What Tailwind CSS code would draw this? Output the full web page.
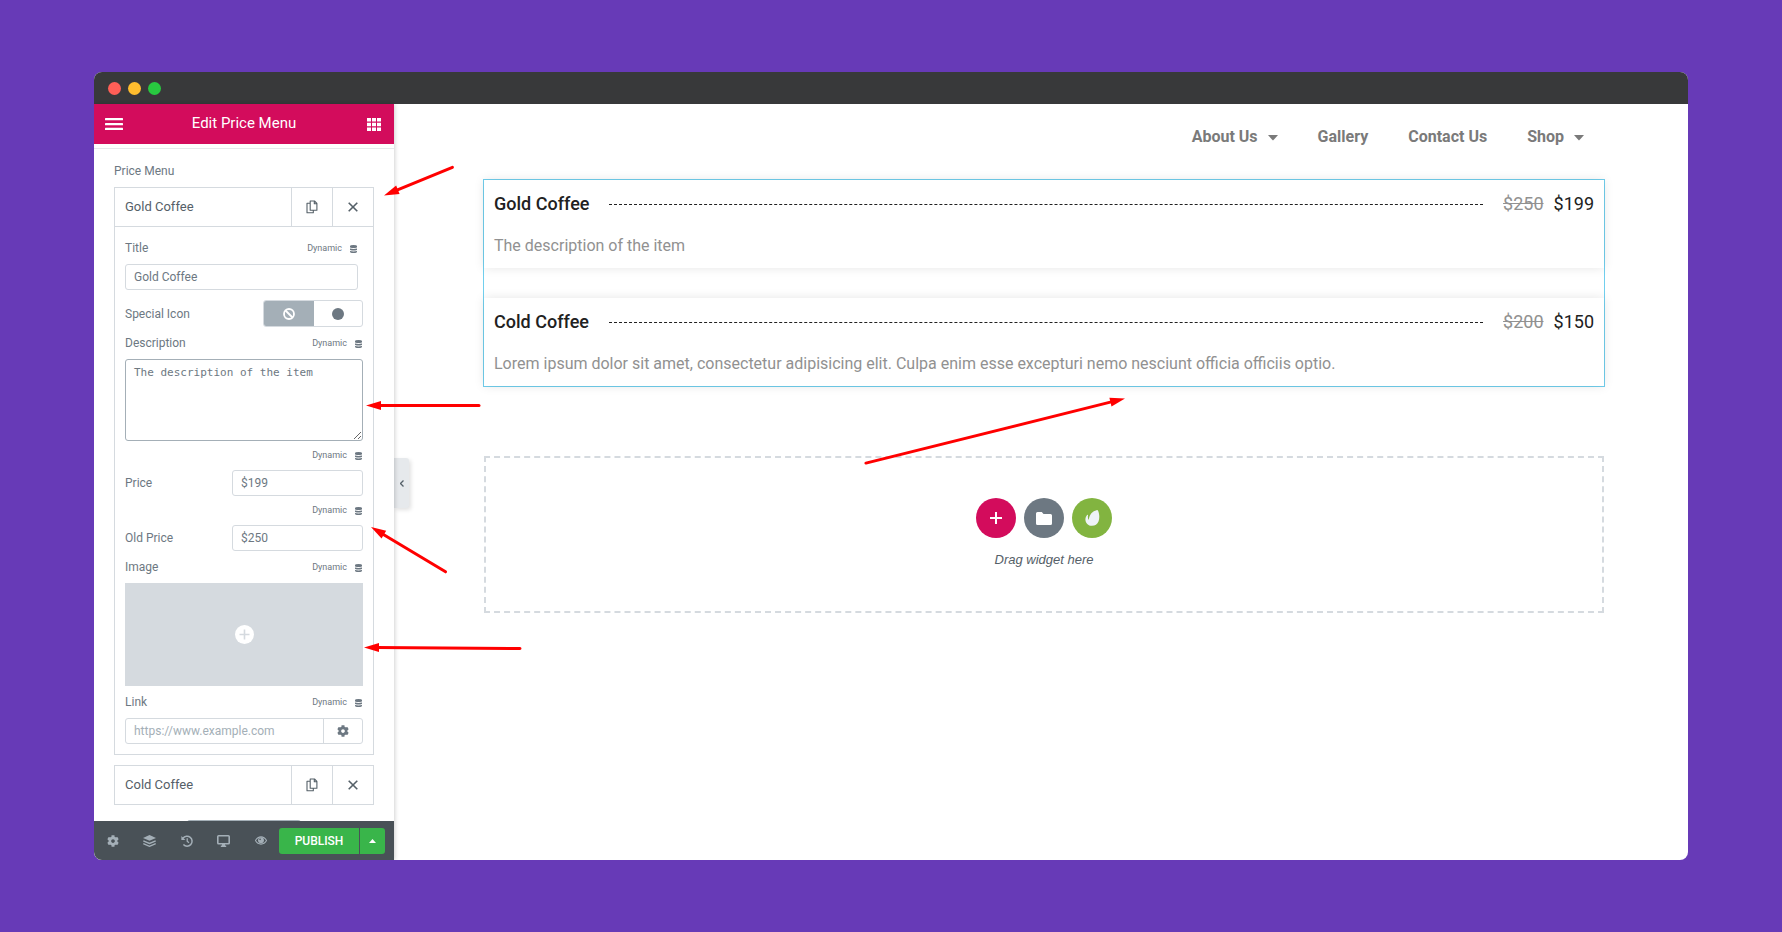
<!DOCTYPE html>
<html lang="en">
<head>
<meta charset="utf-8">
<title>Edit Price Menu</title>
<script src="https://cdn.jsdelivr.net/npm/@tailwindcss/browser@4"></script>
</head>
<body class="relative h-screen bg-[#673ab7] px-[94px] py-[72px] font-[Roboto,'Liberation_Sans',sans-serif] text-[#6d7882]">

<svg class="hidden" aria-hidden="true">
  <symbol id="db" viewBox="0 0 7 8"><path d="M0 1.300Q0 0 3.500 0T7 1.300v.9Q7 3 3.500 3T0 2.200zM0 3.500Q3.500 4.300 7 3.500v1.200q0 .8-3.500.8T0 4.700zM0 6Q3.500 6.800 7 6v.8Q7 8 3.500 8T0 6.800z"/></symbol>
  <symbol id="copy" viewBox="0 0 12 14"><path d="M4.200 1h4.300L10.900 3.400V10.300H4.200zM8.300 1V3.800h2.600M4.200 3.300H1V12.700H7.300V10.300" fill="none" stroke="currentColor" stroke-width="1.100" stroke-linejoin="round"/></symbol>
  <symbol id="close" viewBox="0 0 10 10"><path d="M.7.7l8.600 8.600M9.300.7L.7 9.300" fill="none" stroke="currentColor" stroke-width="1.600"/></symbol>
  <symbol id="gear" viewBox="0 0 512 512"><path fill="currentColor" d="M487.400 315.700l-42.600-24.600c4.300-23.200 4.300-47 0-70.200l42.600-24.600c4.900-2.800 7.100-8.600 5.500-14-11.100-35.600-30-67.800-54.700-94.600-3.800-4.100-10-5.100-14.800-2.300L380.800 110c-17.900-15.400-38.500-27.300-60.800-35.100V25.800c0-5.600-3.900-10.500-9.400-11.700-36.700-8.200-74.300-7.800-109.200 0-5.500 1.200-9.400 6.100-9.400 11.700V75c-22.200 7.900-42.800 19.800-60.800 35.100L88.700 85.500c-4.900-2.800-11-1.900-14.800 2.300-24.700 26.700-43.600 58.900-54.700 94.600-1.700 5.400.6 11.200 5.500 14L67.300 221c-4.300 23.200-4.300 47 0 70.200l-42.600 24.600c-4.900 2.800-7.100 8.600-5.500 14 11.100 35.600 30 67.800 54.700 94.600 3.800 4.100 10 5.100 14.800 2.300l42.600-24.600c17.900 15.400 38.500 27.300 60.800 35.100v49.200c0 5.600 3.900 10.500 9.400 11.700 36.700 8.200 74.300 7.800 109.200 0 5.500-1.200 9.400-6.100 9.400-11.700v-49.200c22.200-7.900 42.800-19.800 60.800-35.100l42.600 24.600c4.900 2.800 11 1.900 14.800-2.300 24.700-26.700 43.600-58.900 54.700-94.600 1.500-5.500-.7-11.300-5.600-14.100zM256 336c-44.100 0-80-35.900-80-80s35.900-80 80-80 80 35.900 80 80-35.900 80-80 80z"/></symbol>
</svg>

<div class="flex h-full flex-col overflow-hidden rounded-[8px] bg-white">
  <div class="flex h-8 shrink-0 items-center gap-[7px] bg-[#38393a] pl-[14px] pt-px">
    <span class="size-[13px] rounded-full bg-[#ff5f57]"></span>
    <span class="size-[13px] rounded-full bg-[#ffbd2e]"></span>
    <span class="size-[13px] rounded-full bg-[#28c940]"></span>
  </div>

  <div class="flex min-h-0 flex-1">
    <aside class="z-10 flex w-[300px] shrink-0 flex-col bg-white shadow-[1px_0_4px_rgba(0,0,0,0.18)]">
      <header class="flex h-10 shrink-0 items-center justify-between bg-[#d30c5c] pl-[11px] pr-[13px] text-white">
        <button aria-label="Menu"><svg class="h-3 w-[18px]" viewBox="0 0 18 12" fill="currentColor"><rect y="0" width="18" height="2.300" rx=".5"/><rect y="5" width="18" height="2.300" rx=".5"/><rect y="9.700" width="18" height="2.300" rx=".5"/></svg></button>
        <h1 class="pb-[2px] pr-[2px] text-[15px] leading-5">Edit Price Menu</h1>
        <button aria-label="Widgets"><svg class="h-[13px] w-[14px]" viewBox="0 0 14 13" fill="currentColor"><path d="M0 0h4v3.500H0zM5 0h4v3.500H5zM10 0h4v3.500h-4zM0 4.700h4v3.500H0zM5 4.700h4v3.500H5zM10 4.700h4v3.500h-4zM0 9.500h4V13H0zM5 9.500h4V13H5zM10 9.500h4V13h-4z"/></svg></button>
      </header>

      <div class="mt-1 min-h-0 flex-1 overflow-hidden border-t border-[#e6e9ec] px-5 pt-3 text-[12px]">
        <h2 class="h-[26px] leading-5">Price Menu</h2>

        <section class="border border-[#d5dadf]">
          <div class="flex h-[39px] border-b border-[#d5dadf] text-[#556068]">
            <button class="flex-1 pl-[10px] text-left text-[13px]">Gold Coffee</button>
            <button aria-label="Duplicate Gold Coffee" class="flex w-[41px] items-center justify-center border-l border-[#d5dadf]"><svg class="h-[14px] w-3"><use href="#copy"/></svg></button>
            <button aria-label="Remove Gold Coffee" class="flex w-[41px] items-center justify-center border-l border-[#d5dadf]"><svg class="size-[10px]"><use href="#close"/></svg></button>
          </div>

          <div class="px-[10px] pb-[10px] pt-[11px]">
            <div class="flex h-5 items-center justify-between pr-[5px]">
              <label for="title">Title</label>
              <button class="flex items-center gap-2 pr-px pt-[2px] text-[9px]">Dynamic<svg class="h-2 w-[7px]" fill="currentColor"><use href="#db"/></svg></button>
            </div>
            <div class="mt-[6px] pr-[5px]"><input id="title" value="Gold Coffee" class="block h-[26px] w-full rounded-[3px] border border-[#d5dadf] px-2 text-[12px]"></div>

            <fieldset class="mt-[10px] flex h-[27px] items-center justify-between">
              <legend class="float-left mr-auto leading-7">Special Icon</legend>
              <div class="flex h-[27px] w-[100px] overflow-hidden rounded-[3px] border border-[#d5dadf]">
                <label class="flex w-[50px] items-center justify-center bg-[#a4afb7] text-white"><input type="radio" name="icon" checked class="sr-only" aria-label="None"><svg class="size-[12px]" viewBox="0 0 12 12" fill="none" stroke="currentColor" stroke-width="1.800"><circle cx="6" cy="6" r="5"/><path d="M2.500 2.500l7 7"/></svg></label>
                <label class="flex flex-1 items-center justify-center"><input type="radio" name="icon" class="sr-only" aria-label="Icon library"><span class="size-[12px] rounded-full bg-[#6d7882]"></span></label>
              </div>
            </fieldset>

            <div class="mt-[6px] flex h-5 items-center justify-between">
              <label for="description">Description</label>
              <button class="flex items-center gap-2 pr-px pt-[2px] text-[9px]">Dynamic<svg class="h-2 w-[7px]" fill="currentColor"><use href="#db"/></svg></button>
            </div>
            <textarea id="description" class="mt-[6px] block h-[82px] w-full rounded-[3px] border border-[#a4afb7] px-2 py-[5px] font-['DejaVu_Sans_Mono',monospace] text-[11px] leading-4">The description of the item</textarea>

            <div class="mt-[5px] flex h-5 items-center justify-end">
              <button class="flex items-center gap-2 pr-px text-[9px]">Dynamic<svg class="h-2 w-[7px]" fill="currentColor"><use href="#db"/></svg></button>
            </div>
            <div class="mt-1 flex h-[26px] items-center justify-between">
              <label for="price">Price</label>
              <input id="price" value="$199" class="h-[26px] w-[131px] rounded-[3px] border border-[#d5dadf] px-2 text-[12px]">
            </div>

            <div class="mt-[5px] flex h-5 items-center justify-end">
              <button class="flex items-center gap-2 pr-px text-[9px]">Dynamic<svg class="h-2 w-[7px]" fill="currentColor"><use href="#db"/></svg></button>
            </div>
            <div class="mt-1 flex h-[26px] items-center justify-between">
              <label for="old-price">Old Price</label>
              <input id="old-price" value="$250" class="h-[26px] w-[131px] rounded-[3px] border border-[#d5dadf] px-2 text-[12px]">
            </div>

            <div class="mt-[6px] flex h-5 items-center justify-between">
              <span>Image</span>
              <button class="flex items-center gap-2 pr-px pt-[2px] text-[9px]">Dynamic<svg class="h-2 w-[7px]" fill="currentColor"><use href="#db"/></svg></button>
            </div>
            <button aria-label="Choose image" class="mt-[6px] flex h-[103px] w-full items-center justify-center bg-[#d5dadf]">
              <svg class="size-[19px]" viewBox="0 0 19 19"><circle cx="9.500" cy="9.500" r="9.500" fill="#fff"/><path d="M9.500 4.500v10M4.500 9.500h10" stroke="#d5dadf" stroke-width="1.600"/></svg>
            </button>

            <div class="mt-[6px] flex h-5 items-center justify-between">
              <label for="link">Link</label>
              <button class="flex items-center gap-2 pr-px pt-[2px] text-[9px]">Dynamic<svg class="h-2 w-[7px]" fill="currentColor"><use href="#db"/></svg></button>
            </div>
            <div class="mt-[6px] flex h-[26px] rounded-[3px] border border-[#d5dadf]">
              <input id="link" placeholder="https://www.example.com" class="min-w-0 flex-1 px-2 text-[12px] placeholder:text-[#a4afb7]">
              <button aria-label="Link options" class="flex w-[39px] items-center justify-center border-l border-[#d5dadf]"><svg class="size-[12px]"><use href="#gear"/></svg></button>
            </div>
          </div>
        </section>

        <section class="mt-[10px] flex h-10 border border-[#d5dadf] text-[#556068]">
          <button class="flex-1 pl-[10px] text-left text-[13px]">Cold Coffee</button>
          <button aria-label="Duplicate Cold Coffee" class="flex w-[41px] items-center justify-center border-l border-[#d5dadf]"><svg class="h-[14px] w-3"><use href="#copy"/></svg></button>
          <button aria-label="Remove Cold Coffee" class="flex w-[41px] items-center justify-center border-l border-[#d5dadf]"><svg class="size-[10px]"><use href="#close"/></svg></button>
        </section>
        <button aria-label="Add item" class="mx-auto mt-[15px] block h-8 w-[114px] rounded-[3px] bg-[#a4afb7]"></button>
      </div>

      <footer class="flex h-[39px] shrink-0 items-center bg-[#495157] pr-[9px] text-[#a4afb7]">
        <div class="flex flex-1 items-center">
          <button aria-label="Settings" class="flex w-[37px] justify-center"><svg class="size-[12px]"><use href="#gear"/></svg></button>
          <button aria-label="Navigator" class="flex w-[37px] justify-center"><svg class="h-3 w-[13px]" viewBox="0 0 13 12" fill="currentColor"><path d="M6.500 0L13 2.900 6.500 5.800 0 2.900z"/><path d="M.3 5.800l6.200 2.700 6.200-2.700M.3 8.600l6.200 2.700 6.200-2.700" fill="none" stroke="currentColor" stroke-width="1.400"/></svg></button>
          <button aria-label="History" class="flex w-[37px] justify-center"><svg class="size-[12px]" viewBox="0 0 12 12" fill="none" stroke="currentColor" stroke-width="1.500"><path d="M2 3.300A5 5 0 1 1 2.400 9.600"/><path d="M6.200 3.300v3l1.800 1.400" stroke-width="1.300"/><path d="M.4.900v4h4z" fill="currentColor" stroke="none"/></svg></button>
          <button aria-label="Responsive mode" class="flex w-[37px] justify-center"><svg class="h-[12px] w-[13px]" viewBox="0 0 13 12"><rect x=".8" y=".8" width="11.400" height="8" rx=".8" fill="none" stroke="currentColor" stroke-width="1.600"/><path fill="currentColor" d="M5 9h3v1.500h1.200V12H3.800v-1.500H5z"/></svg></button>
          <button aria-label="Preview" class="flex w-[37px] justify-center"><svg class="h-[9px] w-3" viewBox="0 0 13 9"><path d="M.5 4.500Q2.800.6 6.500.6t6 3.900q-2.300 3.900-6 3.900T.5 4.500z" fill="none" stroke="currentColor" stroke-width="1.200"/><circle cx="6.500" cy="4.300" r="3.200" fill="currentColor"/><circle cx="5.500" cy="3.200" r=".9" fill="#495157"/></svg></button>
        </div>
        <div class="flex h-[26px] gap-px text-white">
          <button class="w-20 rounded-l-[3px] bg-[#39b54a] text-[12px] font-medium">PUBLISH</button>
          <button aria-label="Save options" class="flex w-[25px] items-center justify-center rounded-r-[3px] bg-[#39b54a]"><svg class="h-1 w-[7px]" viewBox="0 0 7 4" fill="currentColor"><path d="M0 4L3.500 0 7 4z"/></svg></button>
        </div>
      </footer>
    </aside>

    <button aria-label="Collapse panel" class="mt-[2px] flex h-[50px] w-[15px] shrink-0 items-center justify-center self-center rounded-r-[3px] bg-[#e6e9ec] shadow-[2px_2px_4px_rgba(0,0,0,0.12)]"><svg class="h-[7px] w-1" viewBox="0 0 4 7" fill="none" stroke="#556068" stroke-width="1.300"><path d="M3.500.5l-3 3 3 3"/></svg></button>

    <main class="min-w-0 flex-1 pl-[74px] pr-[83px]">
      <nav class="flex h-[75px] items-center justify-end gap-10 pb-[9px] pr-[21px] text-[16px] font-bold text-[#7a7a7a]">
        <a href="#" class="flex items-center gap-[10px]">About Us<svg class="mt-[2px] h-[6px] w-[10px]" viewBox="0 0 10 6" fill="currentColor"><path d="M0 0h10Q7.500 3 5 5.500 2.500 3 0 0z"/></svg></a>
        <a href="#">Gallery</a>
        <a href="#">Contact Us</a>
        <a href="#" class="flex items-center gap-[10px]">Shop<svg class="mt-[2px] h-[6px] w-[10px]" viewBox="0 0 10 6" fill="currentColor"><path d="M0 0h10Q7.500 3 5 5.500 2.500 3 0 0z"/></svg></a>
      </nav>

      <section class="flex flex-col gap-[30px] border border-[#71cfee]">
        <article class="h-[88px] px-[10px] pt-[10px] shadow-[0_0_10px_rgba(0,0,0,0.1)]">
          <div class="flex h-[26px] items-center text-[18px] text-[#212121]">
            <h3 class="font-medium">Gold Coffee</h3>
            <span class="mx-5 mt-[2px] flex-1 border-t border-dashed border-[#212121]"></span>
            <del class="mr-[10px] text-[#919191]">$250</del><span>$199</span>
          </div>
          <p class="mt-[18px] text-[16px] leading-6 text-[#919191]">The description of the item</p>
        </article>
        <article class="h-[88px] px-[10px] pt-[10px] shadow-[0_0_10px_rgba(0,0,0,0.1)]">
          <div class="flex h-[26px] items-center text-[18px] text-[#212121]">
            <h3 class="font-medium">Cold Coffee</h3>
            <span class="mx-5 mt-[2px] flex-1 border-t border-dashed border-[#212121]"></span>
            <del class="mr-[10px] text-[#919191]">$200</del><span>$150</span>
          </div>
          <p class="mt-[18px] text-[16px] leading-6 text-[#919191]">Lorem ipsum dolor sit amet, consectetur adipisicing elit. Culpa enim esse excepturi nemo nesciunt officia officiis optio.</p>
        </article>
      </section>

      <section class="mx-px mt-[69px] flex h-[157px] flex-col items-center border-2 border-dashed border-[#d5dadf] pt-10">
        <div class="flex gap-2">
          <button aria-label="Add section" class="flex size-10 items-center justify-center rounded-full bg-[#d30c5c]"><svg class="size-3" viewBox="0 0 12 12" stroke="#fff" stroke-width="2"><path d="M6 0v12M0 6h12"/></svg></button>
          <button aria-label="Add template" class="flex size-10 items-center justify-center rounded-full bg-[#6d7882]"><svg class="h-[13px] w-4" viewBox="0 0 16 13" fill="#fff"><path d="M1.500 0h4.300l1.700 2H14.500Q16 2 16 3.500v8Q16 13 14.500 13h-13Q0 13 0 11.500v-10Q0 0 1.500 0z"/></svg></button>
          <button aria-label="Envato templates" class="flex size-10 items-center justify-center rounded-full bg-[#82b440]"><svg class="h-4 w-[15px]" viewBox="0 0 15 16" fill="#eef3f7"><path d="M11.600.2c.6-.4 1.200-.1 1.600.7 1.100 2.300 1.600 7.300.4 10.300-1.200 3-3.600 4.600-6.600 4.600C3.200 15.800.4 13 .4 9.400c0-1.800.7-3.400 1.700-4.500.5-.5 1-.2.900.5-.3 1.700-.1 3.400.9 4.400C4.100 4.500 7.800 1 11.600.2z"/></svg></button>
        </div>
        <p class="mt-3 font-['Liberation_Sans',sans-serif] text-[13px] italic leading-5 text-[#556068]">Drag widget here</p>
      </section>
    </main>
  </div>
</div>

<svg class="pointer-events-none absolute left-0 top-0 z-20 h-[932px] w-[1782px]" viewBox="0 0 1782 932" fill="#f00" stroke="#f00" stroke-width="3" stroke-linecap="round" aria-hidden="true">
  <g transform="translate(384 195.500) rotate(-22.400)"><path d="M12 0H74"/><path stroke="none" d="M0 0L15-4.500V4.500z"/></g>
  <g transform="translate(366 405.500)"><path d="M12 0H113"/><path stroke="none" d="M0 0L15-4.500V4.500z"/></g>
  <g transform="translate(371 527) rotate(31)"><path d="M12 0H87"/><path stroke="none" d="M0 0L15-4.500V4.500z"/></g>
  <g transform="translate(364 647.500) rotate(.4)"><path d="M12 0H156"/><path stroke="none" d="M0 0L15-4.500V4.500z"/></g>
  <g transform="translate(1125 398.500) rotate(166)"><path d="M12 0H267"/><path stroke="none" d="M0 0L15-4.500V4.500z"/></g>
</svg>
</body>
</html>
